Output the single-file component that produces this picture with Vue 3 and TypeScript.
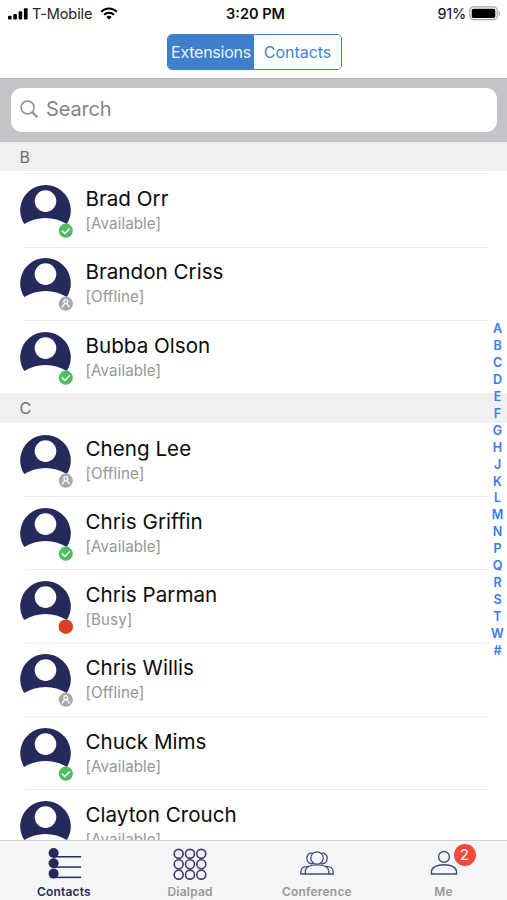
<script setup lang="ts">
type Status = 'Available' | 'Offline' | 'Busy'
interface Contact { name: string; status: Status }
interface Section { letter: string; contacts: Contact[] }

const sections: Section[] = [
  {
    letter: 'B',
    contacts: [
      { name: 'Brad Orr', status: 'Available' },
      { name: 'Brandon Criss', status: 'Offline' },
      { name: 'Bubba Olson', status: 'Available' },
    ],
  },
  {
    letter: 'C',
    contacts: [
      { name: 'Cheng Lee', status: 'Offline' },
      { name: 'Chris Griffin', status: 'Available' },
      { name: 'Chris Parman', status: 'Busy' },
      { name: 'Chris Willis', status: 'Offline' },
      { name: 'Chuck Mims', status: 'Available' },
      { name: 'Clayton Crouch', status: 'Available' },
    ],
  },
]
const indexLetters: string[] = [...'ABCDEFGHJKLMNPQRSTW#']
const dialDots: number[] = [6.7, 18, 29.3]
</script>

<template>
  <div class="screen">
    <header class="top">
      <div class="status-bar">
        <div class="carrier">
          <svg class="signal" width="20" height="12" viewBox="0 0 20 12">
            <rect x="0" y="7.8" width="3.6" height="3.7" rx="1" />
            <rect x="5.3" y="6" width="3.6" height="5.5" rx="1" />
            <rect x="10.6" y="3.3" width="3.6" height="8.2" rx="1" />
            <rect x="15.9" y="0.3" width="3.7" height="11.2" rx="1" />
          </svg>
          <span class="carrier-name">T-Mobile</span>
          <svg class="wifi" width="18" height="13" viewBox="0 0 18 13" fill="none" stroke="#000">
            <path d="M1.2 4.7C5.6 .4 12.4 .4 16.8 4.7" stroke-width="2.2" />
            <path d="M4.1 7.8C6.9 5.1 11.1 5.1 13.9 7.8" stroke-width="2.1" />
            <path d="M9 12.6L6.3 9.9C7.9 8.5 10.1 8.5 11.7 9.9Z" fill="#000" stroke="none" />
          </svg>
        </div>
        <span class="time">3:20 PM</span>
        <div class="power">
          <span>91%</span>
          <svg width="32" height="15" viewBox="0 0 32 15">
            <rect x="0.8" y="0.9" width="27.4" height="12.8" rx="3.6" fill="#fff" stroke="#a3a3a3" stroke-width="1.2" />
            <rect x="2.7" y="2.7" width="23.6" height="9.2" rx="1.7" fill="#000" />
            <path d="M29.7 5c2 .8 2 3.9 0 4.7z" fill="#a3a3a3" />
          </svg>
        </div>
      </div>
      <div class="segments">
        <button class="segment selected">Extensions</button>
        <button class="segment">Contacts</button>
      </div>
    </header>

    <div class="search-band">
      <div class="search">
        <svg width="19" height="19" viewBox="0 0 19 19" fill="none" stroke="#8c8c8c">
          <circle cx="7.6" cy="7.5" r="6.5" stroke-width="1.5" />
          <path d="M12.3 12.2L17.4 17.3" stroke-width="2.2" />
        </svg>
        <span>Search</span>
      </div>
    </div>

    <main class="list">
      <section v-for="section in sections" :key="section.letter" class="section">
        <h2 class="letter">{{ section.letter }}</h2>
        <div v-for="contact in section.contacts" :key="contact.name" class="row">
          <svg class="avatar" width="56" height="56" viewBox="0 0 56 56">
            <path
              fill="#252a5b"
              fill-rule="evenodd"
              d="M4.2 39A25.3 25.3 0 1 1 46.8 39C34 31 17 31 4.2 39ZM25.5 5.3a10.8 10.8 0 1 0 0 21.6a10.8 10.8 0 1 0 0-21.6Z"
            />
            <g v-if="contact.status === 'Available'">
              <circle cx="45.8" cy="45.7" r="7.1" fill="#50bd62" />
              <path d="M41.8 45.5l3 3 5-5" fill="none" stroke="#fff" stroke-width="1.5" />
            </g>
            <g v-else-if="contact.status === 'Offline'">
              <circle cx="45.8" cy="45.7" r="7.1" fill="#a9a9a9" />
              <circle cx="45.8" cy="43.6" r="1.9" fill="none" stroke="#fff" stroke-width="1.2" />
              <path d="M42.1 49.5l2-3.3q1.7-1 3.4 0l2 3.3" fill="none" stroke="#fff" stroke-width="1.3" />
            </g>
            <circle v-else cx="45.8" cy="45.7" r="7.2" fill="#d8431e" />
          </svg>
          <div class="details">
            <span class="name">{{ contact.name }}</span>
            <span class="presence">[{{ contact.status }}]</span>
          </div>
        </div>
      </section>
    </main>

    <nav class="index">
      <span v-for="letter in indexLetters" :key="letter">{{ letter }}</span>
    </nav>

    <nav class="tabs">
      <div class="tab active">
        <svg width="36" height="36" viewBox="0 0 36 36" fill="#252a5b">
          <g v-for="i in 3" :key="i" :transform="`translate(0 ${(i - 1) * 10.3})`">
            <circle cx="7.6" cy="7" r="5" />
            <rect x="7.6" y="10" width="27.5" height="1.5" />
          </g>
        </svg>
        <span>Contacts</span>
      </div>
      <div class="tab">
        <svg width="36" height="36" viewBox="0 0 36 36" fill="none" stroke="#393d70" stroke-width="1.6">
          <template v-for="y in dialDots" :key="y">
            <circle v-for="x in dialDots" :key="x" :cx="x" :cy="y * 0.92 + 1.7" r="4.5" />
          </template>
        </svg>
        <span>Dialpad</span>
      </div>
      <div class="tab">
        <svg width="36" height="36" viewBox="0 0 36 36" fill="none" stroke="#454a78" stroke-width="1.3">
          <circle cx="18" cy="12" r="6.2" />
          <path d="M13.8 7.3C10.2 6.4 7.8 9 7.8 12.5C7.8 16.3 11.4 18.8 14.7 17.2M22.2 7.3C25.8 6.4 28.2 9 28.2 12.5C28.2 16.3 24.6 18.8 21.3 17.2" />
          <path d="M6.3 28V25.5C6.3 21.4 11 18.9 18 18.9S29.7 21.4 29.7 25.5V28Z" />
          <path d="M9.8 20.4C4.2 20.1 1.8 22.7 1.8 26V28H6.3M26.2 20.4C31.8 20.1 34.2 22.7 34.2 26V28H29.7" />
        </svg>
        <span>Conference</span>
      </div>
      <div class="tab">
        <div class="icon-wrap">
          <svg width="36" height="36" viewBox="0 0 36 36" fill="none" stroke="#454a78" stroke-width="1.4">
            <circle cx="18" cy="10.9" r="5.4" />
            <path d="M5.5 28V25.5C5.5 21.4 10.5 18.8 18 18.8S30.5 21.4 30.5 25.5V28Z" />
          </svg>
          <span class="badge">2</span>
        </div>
        <span>Me</span>
      </div>
    </nav>
  </div>
</template>

<style>
body { margin: 0; background: #fff; }
</style>

<style scoped>
* { box-sizing: border-box; }
.screen {
  position: relative;
  display: flex;
  flex-direction: column;
  width: 507px;
  height: 900px;
  overflow: hidden;
  background: #fff;
  color: #0b0b0b;
  font-family: Inter, "Liberation Sans", sans-serif;
}
.top {
  flex: none;
  height: 79px;
  border-bottom: 1px solid #b9b9bb;
}
.status-bar {
  display: grid;
  grid-template-columns: 1fr auto 1fr;
  align-items: center;
  height: 27px;
  padding: 0 6px 0 8px;
  font-size: 14.5px;
}
.carrier, .power { display: flex; align-items: center; }
.carrier-name { margin-left: 4px; color: #222; letter-spacing: -0.1px; }
.wifi { margin-left: 8px; }
.time { padding-left: 2px; font-weight: 600; }
.power { justify-content: flex-end; gap: 3px; letter-spacing: -0.2px; }
.segments {
  display: flex;
  width: 175px;
  height: 36px;
  margin: 7px 0 0 167px;
  border: 1.5px solid #3e80cc;
  border-radius: 5px;
  overflow: hidden;
}
.segment {
  flex: 1;
  padding: 0;
  border: 0;
  background: #fff;
  color: #4585d1;
  font: 16px/35px Inter, "Liberation Sans", sans-serif;
  letter-spacing: -0.05px;
  white-space: nowrap;
}
.segment.selected { flex: 0 0 86px; background: #3e80cc; color: #e9f3ff; letter-spacing: -0.25px; }
.search-band {
  flex: none;
  height: 63px;
  padding: 9px 10px 10px 11px;
  background: #c4c4c8;
}
.search {
  display: flex;
  align-items: center;
  gap: 7px;
  height: 44px;
  padding: 0 0 2px 9px;
  border-radius: 11px;
  background: #fff;
  color: #858585;
  font-size: 20px;
  letter-spacing: -0.15px;
}
.list { flex: 1; min-height: 0; overflow: hidden; }
.letter {
  height: 29.7px;
  margin: 0;
  padding-left: 19.6px;
  background: #f0f0f0;
  color: #6e6e6e;
  font-size: 16px;
  font-weight: 400;
  line-height: 31px;
}
.section:first-child .letter { height: 29px; margin-bottom: 2.3px; line-height: 30px; }
.row {
  display: flex;
  height: 73.3px;
  padding: 11.7px 0 0 20px;
  background: linear-gradient(#ebebeb, #ebebeb) 25px 0 / 464px 1px no-repeat;
}
.section + .section .row:nth-child(2) { background: none; }
.avatar { flex: none; }
.details { display: flex; flex-direction: column; padding-left: 9.5px; }
.name { height: 27px; font-size: 20.6px; line-height: 27.4px; letter-spacing: 0.02px; white-space: nowrap; }
.presence { height: 22px; color: #969696; font-size: 15.2px; line-height: 24.4px; letter-spacing: 0.05px; }
.index {
  position: absolute;
  top: 321.4px;
  right: 0;
  display: flex;
  flex-direction: column;
  width: 19px;
  text-align: center;
  color: #387bf0;
  font-size: 12.5px;
  font-weight: 600;
  line-height: 16.9px;
}
.tabs {
  flex: none;
  display: grid;
  grid-template-columns: repeat(4, 1fr);
  height: 60px;
  padding-top: 5px;
  border-top: 1px solid #d3d3d5;
  background: #f5f6f7;
}
.tab {
  display: flex;
  flex-direction: column;
  align-items: center;
  color: #989898;
  font-size: 12px;
  font-weight: 600;
  letter-spacing: 0.2px;
  line-height: 20px;
}
.tab.active { color: #252a5b; padding-left: 1px; }
.icon-wrap { position: relative; height: 36px; }
.badge {
  position: absolute;
  top: -2px;
  left: 28px;
  width: 22px;
  height: 22px;
  border-radius: 50%;
  background: #ef4a3c;
  color: #fff;
  font-size: 14.5px;
  font-weight: 400;
  line-height: 22px;
  text-align: center;
}
</style>
